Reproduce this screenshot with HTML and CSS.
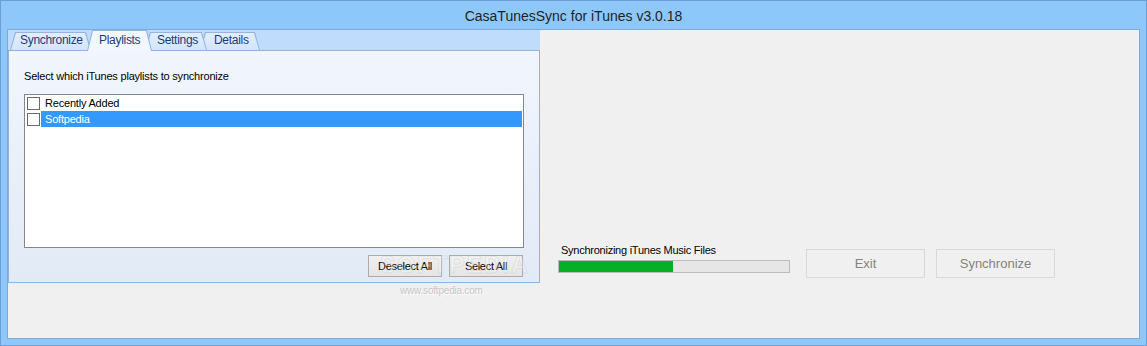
FILE: index.html
```html
<!DOCTYPE html>
<html>
<head>
<meta charset="utf-8">
<link rel="stylesheet" href="styles.css">
</head>
<body>
<div class="window">
  <div class="titlebar">CasaTunesSync for iTunes v3.0.18</div>
  <div class="client">
    <div class="tabctl">
      <div class="tabstrip">
        <div class="tab t-sync"><span>Synchronize</span></div>
        <div class="tab t-play selected"><span>Playlists</span></div>
        <div class="tab t-set"><span>Settings</span></div>
        <div class="tab t-det"><span>Details</span></div>
      </div>
      <div class="panel">
        <div class="prompt">Select which iTunes playlists to synchronize</div>
        <div class="listbox">
          <div class="row"><span class="chk"></span><span class="lbl">Recently Added</span></div>
          <div class="row sel"><span class="chk"></span><span class="lbl">Softpedia</span></div>
        </div>
        <div class="panel-buttons">
          <button class="btn">Deselect All</button>
          <button class="btn">Select All</button>
        </div>
      </div>
    </div>
    <div class="side">
      <div class="progress-group">
        <div class="status">Synchronizing iTunes Music Files</div>
        <div class="bar"><div class="fill" style="width:49.6%"></div></div>
      </div>
      <button class="big-btn exit">Exit</button>
      <button class="big-btn sync">Synchronize</button>
    </div>
    <div class="wm-big">SOFTPEDIA</div>
    <div class="wm-url">www.softpedia.com</div>
  </div>
</div>
</body>
</html>
```

FILE: styles.css
```css
* { box-sizing: border-box; margin: 0; padding: 0; }

body {
  margin: 0;
  width: 1147px;
  height: 346px;
  overflow: hidden;
  font-family: "Liberation Sans", Arial, sans-serif;
  font-size: 11px;
  color: #000;
}

.window {
  width: 1147px;
  height: 346px;
  border: 1px solid #6d9fd4;
  background: #8ec8fa;
  padding: 0 6px 6px;
  display: flex;
  flex-direction: column;
}

.titlebar {
  height: 28px;
  display: flex;
  align-items: center;
  justify-content: center;
  font-size: 14px;
  color: #1f1f1f;
  padding-top: 1px;
}

.client {
  flex: 1;
  border: 1px solid #7ea9d8;
  background: #f0f0f0;
  display: flex;
  position: relative;
}

.tabctl {
  width: 532px;
  height: 253px;
  display: flex;
  flex-direction: column;
  flex: none;
}

.tabstrip {
  height: 20px;
  background: #c0dcfc;
  display: flex;
  align-items: flex-end;
  padding-left: 2px;
  position: relative;
  z-index: 2;
}

.tab {
  position: relative;
  height: 18px;
  background: #93b5e0;
  clip-path: polygon(0 100%, 5px 0, calc(100% - 5px) 0, 100% 100%);
  color: #1b3c7c;
  font-size: 12px;
  letter-spacing: -0.3px;
  line-height: 17px;
  flex: none;
}

.tab::before {
  content: "";
  position: absolute;
  top: 1px;
  left: 1px;
  right: 1px;
  bottom: 0;
  background: linear-gradient(#e4eefc, #d3e5fb);
  clip-path: polygon(0 100%, 5px 0, calc(100% - 5px) 0, 100% 100%);
}

.tab span { position: relative; }

.t-sync { width: 81px; padding-left: 10px; z-index: 2; }
.t-play { width: 65px; padding-left: 12px; margin-left: -4px; }
.t-set  { width: 62px; padding-left: 12px; margin-left: -7px; z-index: 2; }
.t-det  { width: 60px; padding-left: 14px; margin-left: -7px; z-index: 1; }

.tab.selected {
  z-index: 5;
  height: 21px;
  margin-bottom: -1px;
  line-height: 20px;
}

.tab.selected::before {
  background: #f2f7fe;
}

.panel {
  height: 233px;
  border: 1px solid #8fb3e1;
  background: linear-gradient(#f1f6fe, #e2eaf6);
  padding: 19px 0 0 15px;
  position: relative;
  z-index: 1;
}

.prompt {
  line-height: 13px;
  letter-spacing: -0.2px;
}

.listbox {
  margin-top: 11px;
  width: 500px;
  height: 154px;
  border: 1px solid #828790;
  background: #fff;
}

.row {
  height: 16px;
  display: flex;
  align-items: center;
  letter-spacing: -0.2px;
}

.chk {
  width: 13px;
  height: 13px;
  border: 1px solid #6a6a6a;
  background: #fff;
  margin-left: 2px;
  flex: none;
}

.lbl {
  flex: 1;
  height: 16px;
  line-height: 16px;
  margin-left: 1px;
  margin-right: 1px;
  padding-left: 4px;
}

.row.sel .lbl {
  background: #3399ff;
  color: #fff;
}

.panel-buttons {
  width: 499px;
  margin-top: 7px;
  display: flex;
  justify-content: flex-end;
  gap: 7px;
}

.btn {
  width: 74px;
  height: 22px;
  border: 1px solid #acacac;
  background: linear-gradient(#f0f0f0, #e5e5e5);
  font-family: "Liberation Sans", Arial, sans-serif;
  font-size: 11px;
  letter-spacing: -0.3px;
  color: #000;
}

.side {
  flex: 1;
  display: flex;
  align-items: flex-start;
  padding: 214px 0 0 18px;
}

.progress-group {
  width: 232px;
  flex: none;
}

.status {
  height: 16px;
  line-height: 13px;
  padding-left: 3px;
  letter-spacing: -0.25px;
}

.bar {
  height: 13px;
  border: 1px solid #bcbcbc;
  background: #e6e6e6;
}

.fill {
  height: 100%;
  background: #06b025;
}

.big-btn {
  width: 119px;
  height: 29px;
  margin-top: 5px;
  border: 1px solid #d9d9d9;
  background: #f0f0f0;
  color: #838383;
  font-family: "Liberation Sans", Arial, sans-serif;
  font-size: 13px;
  flex: none;
}

.exit { margin-left: 16px; }
.sync { margin-left: 11px; }

.wm-big {
  position: absolute;
  left: 372px;
  top: 222px;
  font-size: 23px;
  font-weight: bold;
  letter-spacing: 2px;
  color: rgba(255, 255, 255, 0.25);
  -webkit-text-stroke: 1px rgba(170, 170, 170, 0.22);
  z-index: 3;
  pointer-events: none;
}

.wm-url {
  position: absolute;
  left: 392px;
  top: 255px;
  font-size: 10px;
  letter-spacing: -0.2px;
  color: #c6c6c6;
  text-shadow: 1px 1px 0 #fff;
}
```
